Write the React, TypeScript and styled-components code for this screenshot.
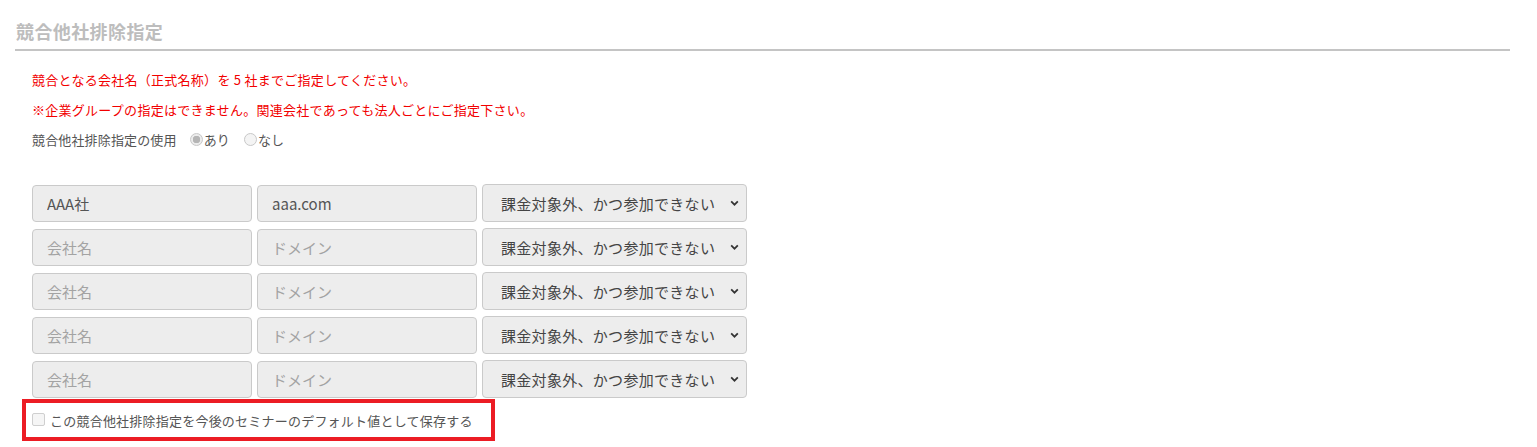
import React from "react";
import styled, { createGlobalStyle } from "styled-components";

const GlobalStyle = createGlobalStyle`
  body {
    margin: 0;
    background: #fff;
    font-family: "Noto Sans CJK JP", "Noto Sans", sans-serif;
    color: #555;
  }
`;

const rows = [
  { company: "AAA社", domain: "aaa.com" },
  { company: "", domain: "" },
  { company: "", domain: "" },
  { company: "", domain: "" },
  { company: "", domain: "" },
];

export default function App() {
  return (
    <>
      <GlobalStyle />
      <Page>
        <Heading>競合他社排除指定</Heading>
        <Content>
          <Notice>競合となる会社名（正式名称）を 5 社までご指定してください。</Notice>
          <Notice>※企業グループの指定はできません。関連会社であっても法人ごとにご指定下さい。</Notice>
          <UsageLine>
            <span>競合他社排除指定の使用</span>
            <RadioGroup>
              <RadioLabel>
                <RadioDot checked />
                あり
              </RadioLabel>
              <RadioLabel>
                <RadioDot />
                なし
              </RadioLabel>
            </RadioGroup>
          </UsageLine>

          <Rows>
            {rows.map((r, i) => (
              <Row key={i}>
                <TextInput readOnly value={r.company} placeholder="会社名" />
                <TextInput readOnly value={r.domain} placeholder="ドメイン" />
                <SelectWrap>
                  <Select defaultValue="ng">
                    <option value="ng">課金対象外、かつ参加できない</option>
                  </Select>
                  <Chevron viewBox="0 0 10 8" width="9" height="7">
                    <path d="M1.2 1.6 L5 5.4 L8.8 1.6" fill="none" stroke="#333" strokeWidth="2" />
                  </Chevron>
                </SelectWrap>
              </Row>
            ))}
          </Rows>

          <Highlight>
            <CheckLabel>
              <CheckBox />
              この競合他社排除指定を今後のセミナーのデフォルト値として保存する
            </CheckLabel>
          </Highlight>
        </Content>
      </Page>
    </>
  );
}

const Page = styled.div`
  padding: 0 27px 0 15px;
`;

const Heading = styled.h2`
  margin: 0;
  padding: 18px 0 4px 1px;
  font-size: 18px;
  line-height: 27px;
  font-weight: 700;
  letter-spacing: 0.4px;
  color: #bdbdbd;
  border-bottom: 2px solid #c4c4c4;
`;

const Content = styled.div`
  padding: 14px 0 0 17px;
`;

const Notice = styled.p`
  margin: 0;
  font-size: 13px;
  line-height: 30px;
  letter-spacing: 0.27px;
  color: #f20000;
`;

const UsageLine = styled.div`
  display: flex;
  align-items: center;
  height: 29px;
  font-size: 13px;
  letter-spacing: 0.15px;
  color: #555;
`;

const RadioGroup = styled.div`
  display: flex;
  gap: 14px;
  margin-left: 13px;
`;

const RadioLabel = styled.label`
  display: inline-flex;
  align-items: center;
  gap: 1px;
`;

const RadioDot = styled.span<{ checked?: boolean }>`
  box-sizing: border-box;
  width: 13px;
  height: 13px;
  border-radius: 50%;
  border: 1px solid #c8c8c8;
  background: ${(p) => (p.checked ? "radial-gradient(circle, #b5b5b5 0 3.5px, #ececec 4px)" : "#f4f4f4")};
`;

const Rows = styled.div`
  display: flex;
  flex-direction: column;
  gap: 6px;
  margin-top: 30px;
`;

const Row = styled.div`
  display: flex;
  align-items: flex-start;
  gap: 5px;
`;

const TextInput = styled.input`
  box-sizing: border-box;
  width: 220px;
  height: 37px;
  margin: 1px 0 0;
  padding: 0 14px;
  border: 1px solid #cacaca;
  border-radius: 4px;
  background: #ededed;
  font-family: "Noto Sans CJK JP", "Noto Sans", sans-serif;
  font-size: 15px;
  color: #555;
  outline: none;

  &::placeholder {
    color: #a3a3a3;
  }
`;

const SelectWrap = styled.div`
  position: relative;
  width: 265px;
`;

const Select = styled.select`
  box-sizing: border-box;
  appearance: none;
  display: block;
  width: 100%;
  height: 38px;
  padding: 0 0 0 18px;
  border: 1px solid #cacaca;
  border-radius: 4px;
  background: #ededed;
  font-family: "Noto Sans CJK JP", "Noto Sans", sans-serif;
  font-size: 15px;
  letter-spacing: 0.3px;
  color: #444;
  outline: none;
`;

const Chevron = styled.svg`
  position: absolute;
  right: 8px;
  top: 16px;
  pointer-events: none;
`;

const Highlight = styled.div`
  width: fit-content;
  margin: 1px 0 0 -10px;
  border: 4px solid #ec1c24;
  padding: 0 18px 0 6px;
`;

const CheckLabel = styled.label`
  display: flex;
  align-items: center;
  gap: 5px;
  height: 34px;
  font-size: 13px;
  letter-spacing: 0.22px;
  color: #555;
`;

const CheckBox = styled.span`
  box-sizing: border-box;
  width: 13px;
  height: 13px;
  margin-top: -2px;
  border: 1px solid #cfcfcf;
  border-radius: 2px;
  background: #f5f5f5;
`;
